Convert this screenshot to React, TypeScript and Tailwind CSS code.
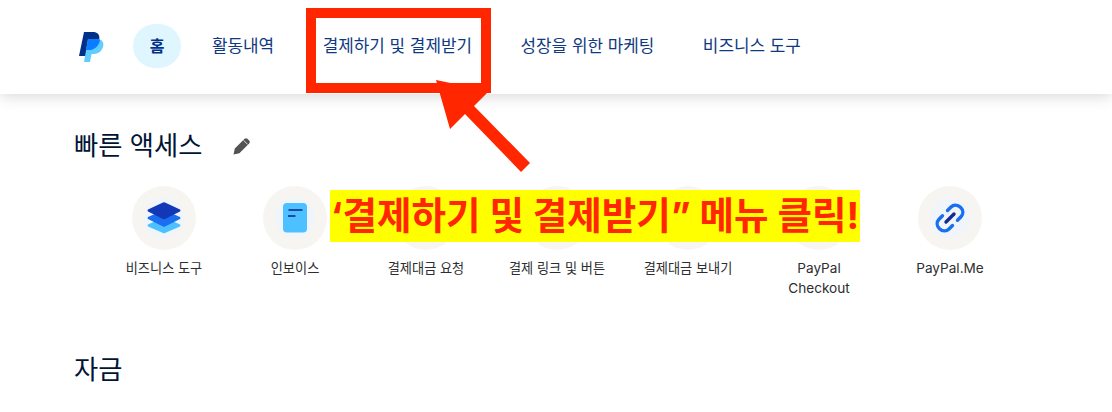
import React from "react";

const FONT = "font-['Inter','Noto_Sans_CJK_KR',sans-serif]";

function Logo() {
  return (
    <svg width="26" height="32" viewBox="0 0 26 32" className="block">
      <path d="M5 2 H14 C18 2 21 4.5 20.3 9 C19.5 14 15.5 17 11 17 H9 L7 26 H0 Z" fill="#003087" />
      <path d="M9 9 H18 C22 9 25 11.5 24.3 15.5 C23.5 20 20 24 15 24 H12.5 L11 32 H5 Z" fill="#60cdff" />
      <path d="M9 9 H18 C19.2 9 20.2 9.2 21 9.6 C20.5 15 16 20 11 20 H7 Z" fill="#0a7cff" />
    </svg>
  );
}

function Pencil() {
  return (
    <svg width="18" height="18" viewBox="0 0 18 18" className="block">
      <path d="M0.5 17.5 L1.8 11.6 L11.6 1.8 C12.4 1 13.6 1 14.4 1.8 L16.2 3.6 C17 4.4 17 5.6 16.2 6.4 L6.4 16.2 Z" fill="#515354" />
      <path d="M10.6 3.4 L14.6 7.4" stroke="#ffffff" strokeWidth="0.8" />
    </svg>
  );
}

function Layers() {
  return (
    <svg width="34" height="32" viewBox="0 0 34 32" className="block">
      <path d="M17 15 L33 22.5 Q34 23.5 33 24.5 L18 31 Q17 31.5 16 31 L1 24.5 Q0 23.5 1 22.5 Z" fill="#4dc1ff" />
      <path d="M17 8 L33 15 Q34 16 33 17 L18 24.5 Q17 25 16 24.5 L1 17 Q0 16 1 15 Z" fill="#1a6ef0" />
      <path d="M16 0.5 Q17 0 18 0.5 L33 7.5 Q34 8.5 33 9.5 L18 17 Q17 17.5 16 17 L1 9.5 Q0 8.5 1 7.5 Z" fill="#1238b8" />
    </svg>
  );
}

function Invoice() {
  return (
    <svg width="24" height="30" viewBox="0 0 24 30" className="block">
      <rect width="24" height="29.5" rx="4" fill="#4dc1ff" />
      <path d="M5.5 7 H19.5" stroke="#142c8e" strokeWidth="1.6" />
      <path d="M5 13 H12.5" stroke="#142c8e" strokeWidth="1.6" />
    </svg>
  );
}

function LinkIcon() {
  return (
    <svg width="30" height="30" viewBox="0 0 30 30" fill="none" className="block">
      <path d="M12.5 7.5 L16 4 C18.5 1.5 22.5 1.5 25.5 4.3 C28.5 7.2 28.5 11.2 26 13.8 L22.5 17.3" stroke="#1a6ef0" strokeWidth="3.4" strokeLinecap="round" />
      <path d="M17.5 22.5 L14 26 C11.5 28.5 7.5 28.5 4.5 25.7 C1.5 22.8 1.5 18.8 4 16.2 L7.5 12.7" stroke="#1a6ef0" strokeWidth="3.4" strokeLinecap="round" />
      <path d="M11 19 L19 11" stroke="#142c8e" strokeWidth="3.4" strokeLinecap="round" />
    </svg>
  );
}

function Tile({ label, icon, latin }: { label: React.ReactNode; icon?: React.ReactNode; latin?: boolean }) {
  return (
    <div className="flex flex-col items-center w-[131px] shrink-0">
      <div className="w-16 h-16 rounded-full bg-[#f6f5f2] flex items-center justify-center">
        <div className="w-10 h-10 rounded-full bg-[#f0f5fb] flex items-center justify-center">{icon}</div>
      </div>
      <div className={latin ? "mt-[8px] text-[13.6px] leading-[20px] text-[#2c2e2f] text-center" : "mt-[8px] text-[13.2px] leading-[20px] text-[#2c2e2f] text-center"}>{label}</div>
    </div>
  );
}

const navItem = "px-4 text-[16.9px] leading-[24px] text-[#0f3a82]";

export default function App() {
  return (
    <div className={`relative w-[1112px] h-[412px] overflow-hidden bg-white ${FONT}`}>
      <header className="h-[94px] bg-white shadow-[0_2px_14px_rgba(0,0,0,0.16)] flex items-center pl-[79px] pb-[2px]">
        <Logo />
        <div className="ml-[28px] mr-[-2px] w-12 h-11 rounded-full bg-[#dff6ff] flex items-center justify-center text-[16px] font-bold text-[#003087]">
          홈
        </div>
        <nav className="flex items-center gap-[16.5px] ml-[17px]">
          <span className={navItem}>활동내역</span>
          <span className={navItem}>결제하기 및 결제받기</span>
          <span className={navItem}>성장을 위한 마케팅</span>
          <span className={navItem}>비즈니스 도구</span>
        </nav>
      </header>

      <main className="pl-[74px]">
        <div className="flex items-center mt-[34px] h-9">
          <h2 className="text-[26.3px] leading-9 text-[#001435]">빠른 액세스</h2>
          <span className="ml-[31px]"><Pencil /></span>
        </div>
        <div className="flex ml-[24.5px] mt-[22px] h-[114px]">
          <Tile label="비즈니스 도구" icon={<Layers />} />
          <Tile label="인보이스" icon={<Invoice />} />
          <Tile label="결제대금 요청" />
          <Tile label="결제 링크 및 버튼" />
          <Tile label="결제대금 보내기" />
          <Tile latin label={<>PayPal<br />Checkout</>} />
          <Tile latin label="PayPal.Me" icon={<LinkIcon />} />
        </div>
        <h2 className="mt-[52px] text-[26.3px] leading-9 text-[#001435]">자금</h2>
      </main>

      {/* Annotation overlays */}
      <div className="absolute left-[306px] top-2 w-[185px] h-[85px] border-[10px] border-[#ff2600]" />
      <svg className="absolute left-[430px] top-[75px]" width="110" height="105" viewBox="0 0 110 105">
        <path d="M6 5 L20 54 L35 39 L91 97 L100 88 L44 31 L59 16 Z" fill="#ff2600" />
      </svg>
      <div className="absolute left-[330px] top-[190px] w-[530px] h-[52px] bg-[#ffff00] flex items-center justify-center whitespace-nowrap text-[37.5px] font-bold text-[#ff2600]">
        ‘결제하기 및 결제받기” 메뉴 클릭!
      </div>
    </div>
  );
}
